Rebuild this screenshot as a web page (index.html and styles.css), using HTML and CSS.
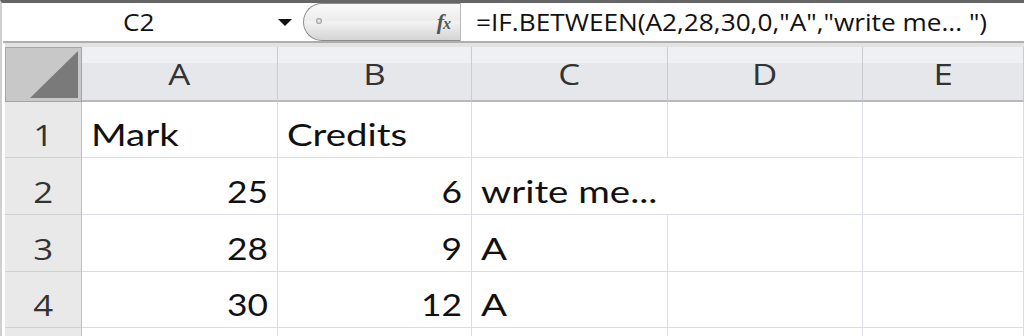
FILE: index.html
```html
<!DOCTYPE html>
<html lang="en">
<head>
    <meta charset="UTF-8">
    <title>IF.BETWEEN</title>
    <link rel="stylesheet" href="styles.css">
</head>
<body>
    <div class="app">
        <div class="formula-bar">
            <div class="name-box"><span class="bar-txt">C2</span></div>
            <div class="name-arrow">
                <svg width="14" height="8" viewBox="0 0 14 8"><path d="M0 0 L14 0 L7 7 Z" fill="#111"/></svg>
            </div>
            <div class="fx-pill">
                <span class="pill-dot"></span>
                <span class="fx">f<span class="fx-x">x</span></span>
            </div>
            <div class="formula"><span class="bar-txt">=IF.BETWEEN(A2,28,30,0,"A","write me... ")</span></div>
        </div>

        <div class="sheet">
            <div class="corner">
                <svg width="48" height="47" viewBox="0 0 48 47"><path d="M0 47 L48 47 L48 0 Z" fill="#7a7a7a"/></svg>
            </div>
            <div class="col-head"><span class="head-txt">A</span></div>
            <div class="col-head"><span class="head-txt">B</span></div>
            <div class="col-head"><span class="head-txt">C</span></div>
            <div class="col-head"><span class="head-txt">D</span></div>
            <div class="col-head"><span class="head-txt">E</span></div>

            <div class="row-head"><span class="head-txt">1</span></div>
            <div class="cell"><span class="txt">Mark</span></div>
            <div class="cell"><span class="txt">Credits</span></div>
            <div class="cell"></div>
            <div class="cell"></div>
            <div class="cell"></div>

            <div class="row-head"><span class="head-txt">2</span></div>
            <div class="cell num"><span class="txt">25</span></div>
            <div class="cell num"><span class="txt">6</span></div>
            <div class="cell overflow"><span class="txt">write me...</span></div>
            <div class="cell"></div>
            <div class="cell"></div>

            <div class="row-head"><span class="head-txt">3</span></div>
            <div class="cell num"><span class="txt">28</span></div>
            <div class="cell num"><span class="txt">9</span></div>
            <div class="cell"><span class="txt">A</span></div>
            <div class="cell"></div>
            <div class="cell"></div>

            <div class="row-head"><span class="head-txt">4</span></div>
            <div class="cell num"><span class="txt">30</span></div>
            <div class="cell num"><span class="txt">12</span></div>
            <div class="cell"><span class="txt">A</span></div>
            <div class="cell"></div>
            <div class="cell"></div>

            <div class="row-head"></div>
            <div class="cell"></div>
            <div class="cell"></div>
            <div class="cell"></div>
            <div class="cell"></div>
            <div class="cell"></div>
        </div>
    </div>
</body>
</html>
```

FILE: styles.css
```css
body {
    margin: 0;
    background: #fff;
    overflow: hidden;
}

.app {
    width: 1024px;
    height: 336px;
    box-sizing: border-box;
    border-top: 3px solid #666;
    border-left: 2px solid #cfcfcf;
    padding-left: 1px;
    overflow: hidden;
}

.formula-bar {
    display: flex;
    align-items: stretch;
    height: 38px;
    border-bottom: 2px solid #aeaeae;
    font-family: "Open Sans", sans-serif;
    color: #111;
}

.bar-txt {
    display: inline-block;
    transform: scaleX(1.14);
    transform-origin: left center;
    white-space: nowrap;
}

.name-box {
    width: 275px;
    display: flex;
    align-items: center;
    padding-left: 120px;
    font-size: 23px;
    box-sizing: border-box;
}

.name-arrow {
    width: 25px;
    display: flex;
    align-items: center;
    padding-top: 2px;
}

.fx-pill {
    position: relative;
    width: 158px;
    border: 1px solid #8c8c8c;
    border-right: 1px solid #b8b8b8;
    border-radius: 20px 0 0 20px;
    box-sizing: border-box;
    background: linear-gradient(#fafafa 0%, #ececec 45%, #f2f2f2 50%, #d4d4d4 100%);
    display: flex;
    align-items: center;
    justify-content: flex-end;
    padding-right: 10px;
}

.pill-dot {
    position: absolute;
    left: 12px;
    top: 14px;
    width: 6px;
    height: 6px;
    border-radius: 50%;
    background: radial-gradient(#fff 0%, #999 70%);
}

.fx {
    font-family: "Liberation Serif", serif;
    font-style: italic;
    font-weight: bold;
    font-size: 22px;
    color: #555;
    letter-spacing: -1px;
}

.fx-x {
    font-size: 16px;
}

.formula {
    flex: 1;
    display: flex;
    align-items: center;
    padding-left: 15px;
    font-size: 23px;
}

.sheet {
    display: grid;
    grid-template-columns: 77px 196px 194px 196px 195px 161px;
    grid-template-rows: 55px 56px 57px 57px 56px 20px;
    border-top: 4px solid #e2e2e2;
    margin-left: 2px;
}

.corner {
    background: #c8c8c8;
    border: 1px solid #a4a4a4;
    box-sizing: border-box;
    display: flex;
    align-items: flex-end;
    justify-content: flex-end;
    padding: 0 3px 3px 0;
}

.head-txt {
    display: inline-block;
    transform: scaleX(1.2);
}

.col-head {
    background: linear-gradient(#eff0f3 0%, #eff0f3 30%, #e5e7ea 31%, #e5e7ea 100%);
    border-right: 1px solid #c9ccd0;
    border-bottom: 2px solid #b9b9b9;
    box-sizing: border-box;
    display: flex;
    align-items: center;
    justify-content: center;
    font-family: "Open Sans", sans-serif;
    font-size: 29px;
    color: #333;
}

.row-head {
    background: #e9e9e9;
    border-right: 1px solid #bdbdbd;
    border-bottom: 1px solid #cfcfcf;
    box-sizing: border-box;
    display: flex;
    align-items: center;
    justify-content: center;
    padding-top: 10px;
    font-family: "Open Sans", sans-serif;
    font-size: 29px;
    color: #333;
}

.cell {
    border-right: 1px solid #dadee4;
    border-bottom: 1px solid #dadee4;
    box-sizing: border-box;
    display: flex;
    align-items: flex-end;
    padding: 0 9px 4px 9px;
    font-family: "Lato", sans-serif;
    font-size: 31px;
    color: #111;
    white-space: nowrap;
}

.txt {
    display: inline-block;
    transform: scaleX(1.24);
    transform-origin: left bottom;
}

.num {
    justify-content: flex-end;
}

.num .txt {
    transform: scaleX(1.14);
    transform-origin: right bottom;
}

.overflow {
    border-right: none;
    position: relative;
    z-index: 1;
}
```
